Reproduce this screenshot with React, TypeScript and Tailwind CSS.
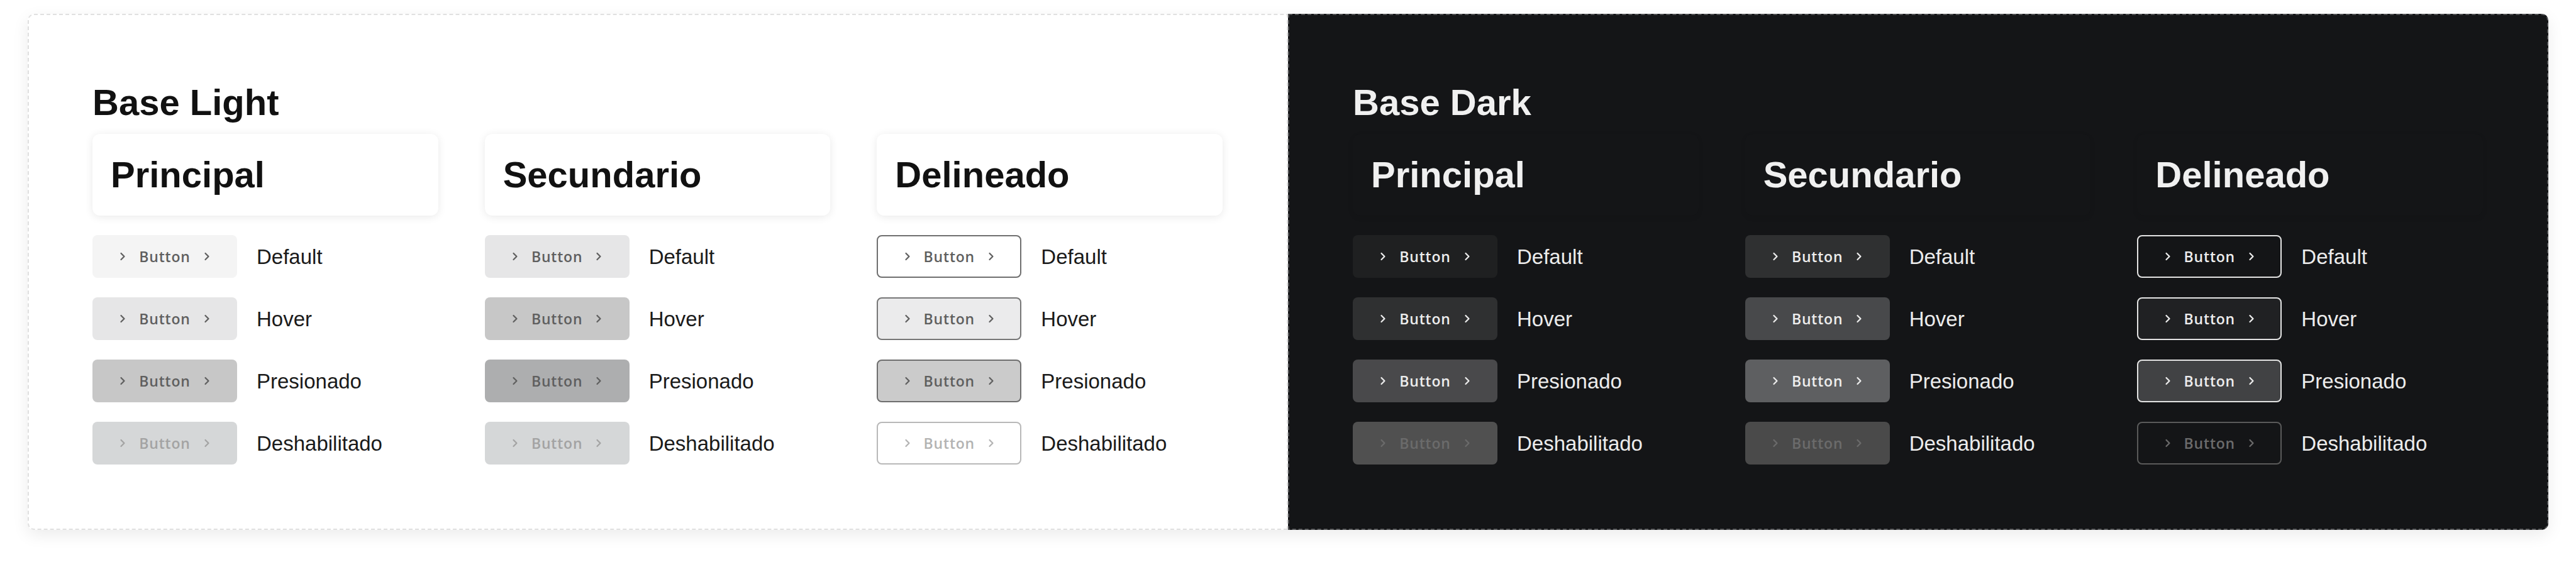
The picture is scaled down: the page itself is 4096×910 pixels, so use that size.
import React from "react";

type Variant = {
  box: string;
  text: string;
};

type Column = {
  title: string;
  states: Variant[];
};

const labels = ["Default", "Hover", "Presionado", "Deshabilitado"];

const lightColumns: Column[] = [
  {
    title: "Principal",
    states: [
      { box: "bg-[#f4f4f4]", text: "text-[#5f5f5f]" },
      { box: "bg-[#e6e6e7]", text: "text-[#5f5f5f]" },
      { box: "bg-[#c7c7c7]", text: "text-[#5f5f5f]" },
      { box: "bg-[#d5d7d8]", text: "text-[#a3a3a3]" },
    ],
  },
  {
    title: "Secundario",
    states: [
      { box: "bg-[#e6e6e7]", text: "text-[#5f5f5f]" },
      { box: "bg-[#c7c7c7]", text: "text-[#5f5f5f]" },
      { box: "bg-[#adaeaf]", text: "text-[#5f5f5f]" },
      { box: "bg-[#d5d7d8]", text: "text-[#a3a3a3]" },
    ],
  },
  {
    title: "Delineado",
    states: [
      { box: "bg-white border-2 border-[#6e6e6e]", text: "text-[#5f5f5f]" },
      { box: "bg-[#ebebec] border-2 border-[#767676]", text: "text-[#5f5f5f]" },
      { box: "bg-[#cbcbcb] border-2 border-[#6e6e6e]", text: "text-[#5f5f5f]" },
      { box: "bg-white border-2 border-[#b8b8b8]", text: "text-[#b3b3b3]" },
    ],
  },
];

const darkColumns: Column[] = [
  {
    title: "Principal",
    states: [
      { box: "bg-[#1f2021]", text: "text-[#ededed]" },
      { box: "bg-[#2f3031]", text: "text-[#ededed]" },
      { box: "bg-[#49494b]", text: "text-[#ededed]" },
      { box: "bg-[#505050]", text: "text-[#6b6b6b]" },
    ],
  },
  {
    title: "Secundario",
    states: [
      { box: "bg-[#2f3031]", text: "text-[#ededed]" },
      { box: "bg-[#48494b]", text: "text-[#ededed]" },
      { box: "bg-[#5e5f61]", text: "text-[#ededed]" },
      { box: "bg-[#4a4a4a]", text: "text-[#6b6b6b]" },
    ],
  },
  {
    title: "Delineado",
    states: [
      { box: "bg-[#141517] border-2 border-[#e4e4e4]", text: "text-[#ededed]" },
      { box: "bg-[#202123] border-2 border-[#e4e4e4]", text: "text-[#ededed]" },
      { box: "bg-[#414244] border-2 border-[#e4e4e4]", text: "text-[#ededed]" },
      { box: "bg-[#141517] border-2 border-[#5a5a5a]", text: "text-[#6b6b6b]" },
    ],
  },
];

function Chevron() {
  return (
    <svg width="10" height="14" viewBox="0 0 10 14" fill="none" className="shrink-0">
      <path
        d="M2.5 2 L7.5 7 L2.5 12"
        stroke="currentColor"
        strokeWidth="2.2"
        strokeLinecap="round"
        strokeLinejoin="round"
      />
    </svg>
  );
}

function DemoButton({ variant }: { variant: Variant }) {
  return (
    <div
      className={`w-[230px] h-[68px] shrink-0 rounded-lg flex items-center justify-center gap-[21px] ${variant.box} ${variant.text}`}
    >
      <Chevron />
      <span className="text-[23px] leading-none font-semibold tracking-[0.8px] font-['Open_Sans',sans-serif]">
        Button
      </span>
      <Chevron />
    </div>
  );
}

function ButtonColumn({ column, dark }: { column: Column; dark: boolean }) {
  return (
    <div className="flex flex-col gap-[31px]">
      {/* Title card */}
      <div
        className={`h-[130px] rounded-xl flex items-center px-[29px] ${
          dark
            ? "bg-[#141517] shadow-[0_3px_8px_rgba(0,0,0,0.08)] text-[#f0f0f0]"
            : "bg-white shadow-[0_2px_14px_rgba(0,0,0,0.09)] text-[#111111]"
        }`}
      >
        <h3 className="text-[58px] leading-none font-bold">{column.title}</h3>
      </div>

      {column.states.map((variant, i) => (
        <div key={labels[i]} className="h-[68px] flex items-center gap-[31px]">
          <DemoButton variant={variant} />
          <span
            className={`text-[33px] leading-none ${dark ? "text-[#ececec]" : "text-[#1a1a1a]"}`}
          >
            {labels[i]}
          </span>
        </div>
      ))}
    </div>
  );
}

function Panel({ title, columns, dark }: { title: string; columns: Column[]; dark: boolean }) {
  return (
    <section
      className={`flex-1 border-2 border-dashed pt-[110px] pb-[102px] pl-[101px] pr-[102px] ${
        dark
          ? "bg-[#141517] border-[#4e4f51] rounded-r-[10px]"
          : "bg-white border-[#e0e0e0] rounded-l-[10px]"
      }`}
    >
      <h2
        className={`text-[58px] leading-none font-bold mb-[21px] ${
          dark ? "text-[#f0f0f0]" : "text-[#111111]"
        }`}
      >
        {title}
      </h2>
      <div className="grid grid-cols-3 gap-x-[74px]">
        {columns.map((c) => (
          <ButtonColumn key={c.title} column={c} dark={dark} />
        ))}
      </div>
    </section>
  );
}

export default function App() {
  return (
    <main className="min-h-screen bg-white pt-[22px] px-[44px] font-['Liberation_Sans',Arial,sans-serif]">
      <div className="w-[4008px] flex rounded-[10px] shadow-[0_8px_26px_rgba(0,0,0,0.08)]">
        <Panel title="Base Light" columns={lightColumns} dark={false} />
        <Panel title="Base Dark" columns={darkColumns} dark={true} />
      </div>
    </main>
  );
}
